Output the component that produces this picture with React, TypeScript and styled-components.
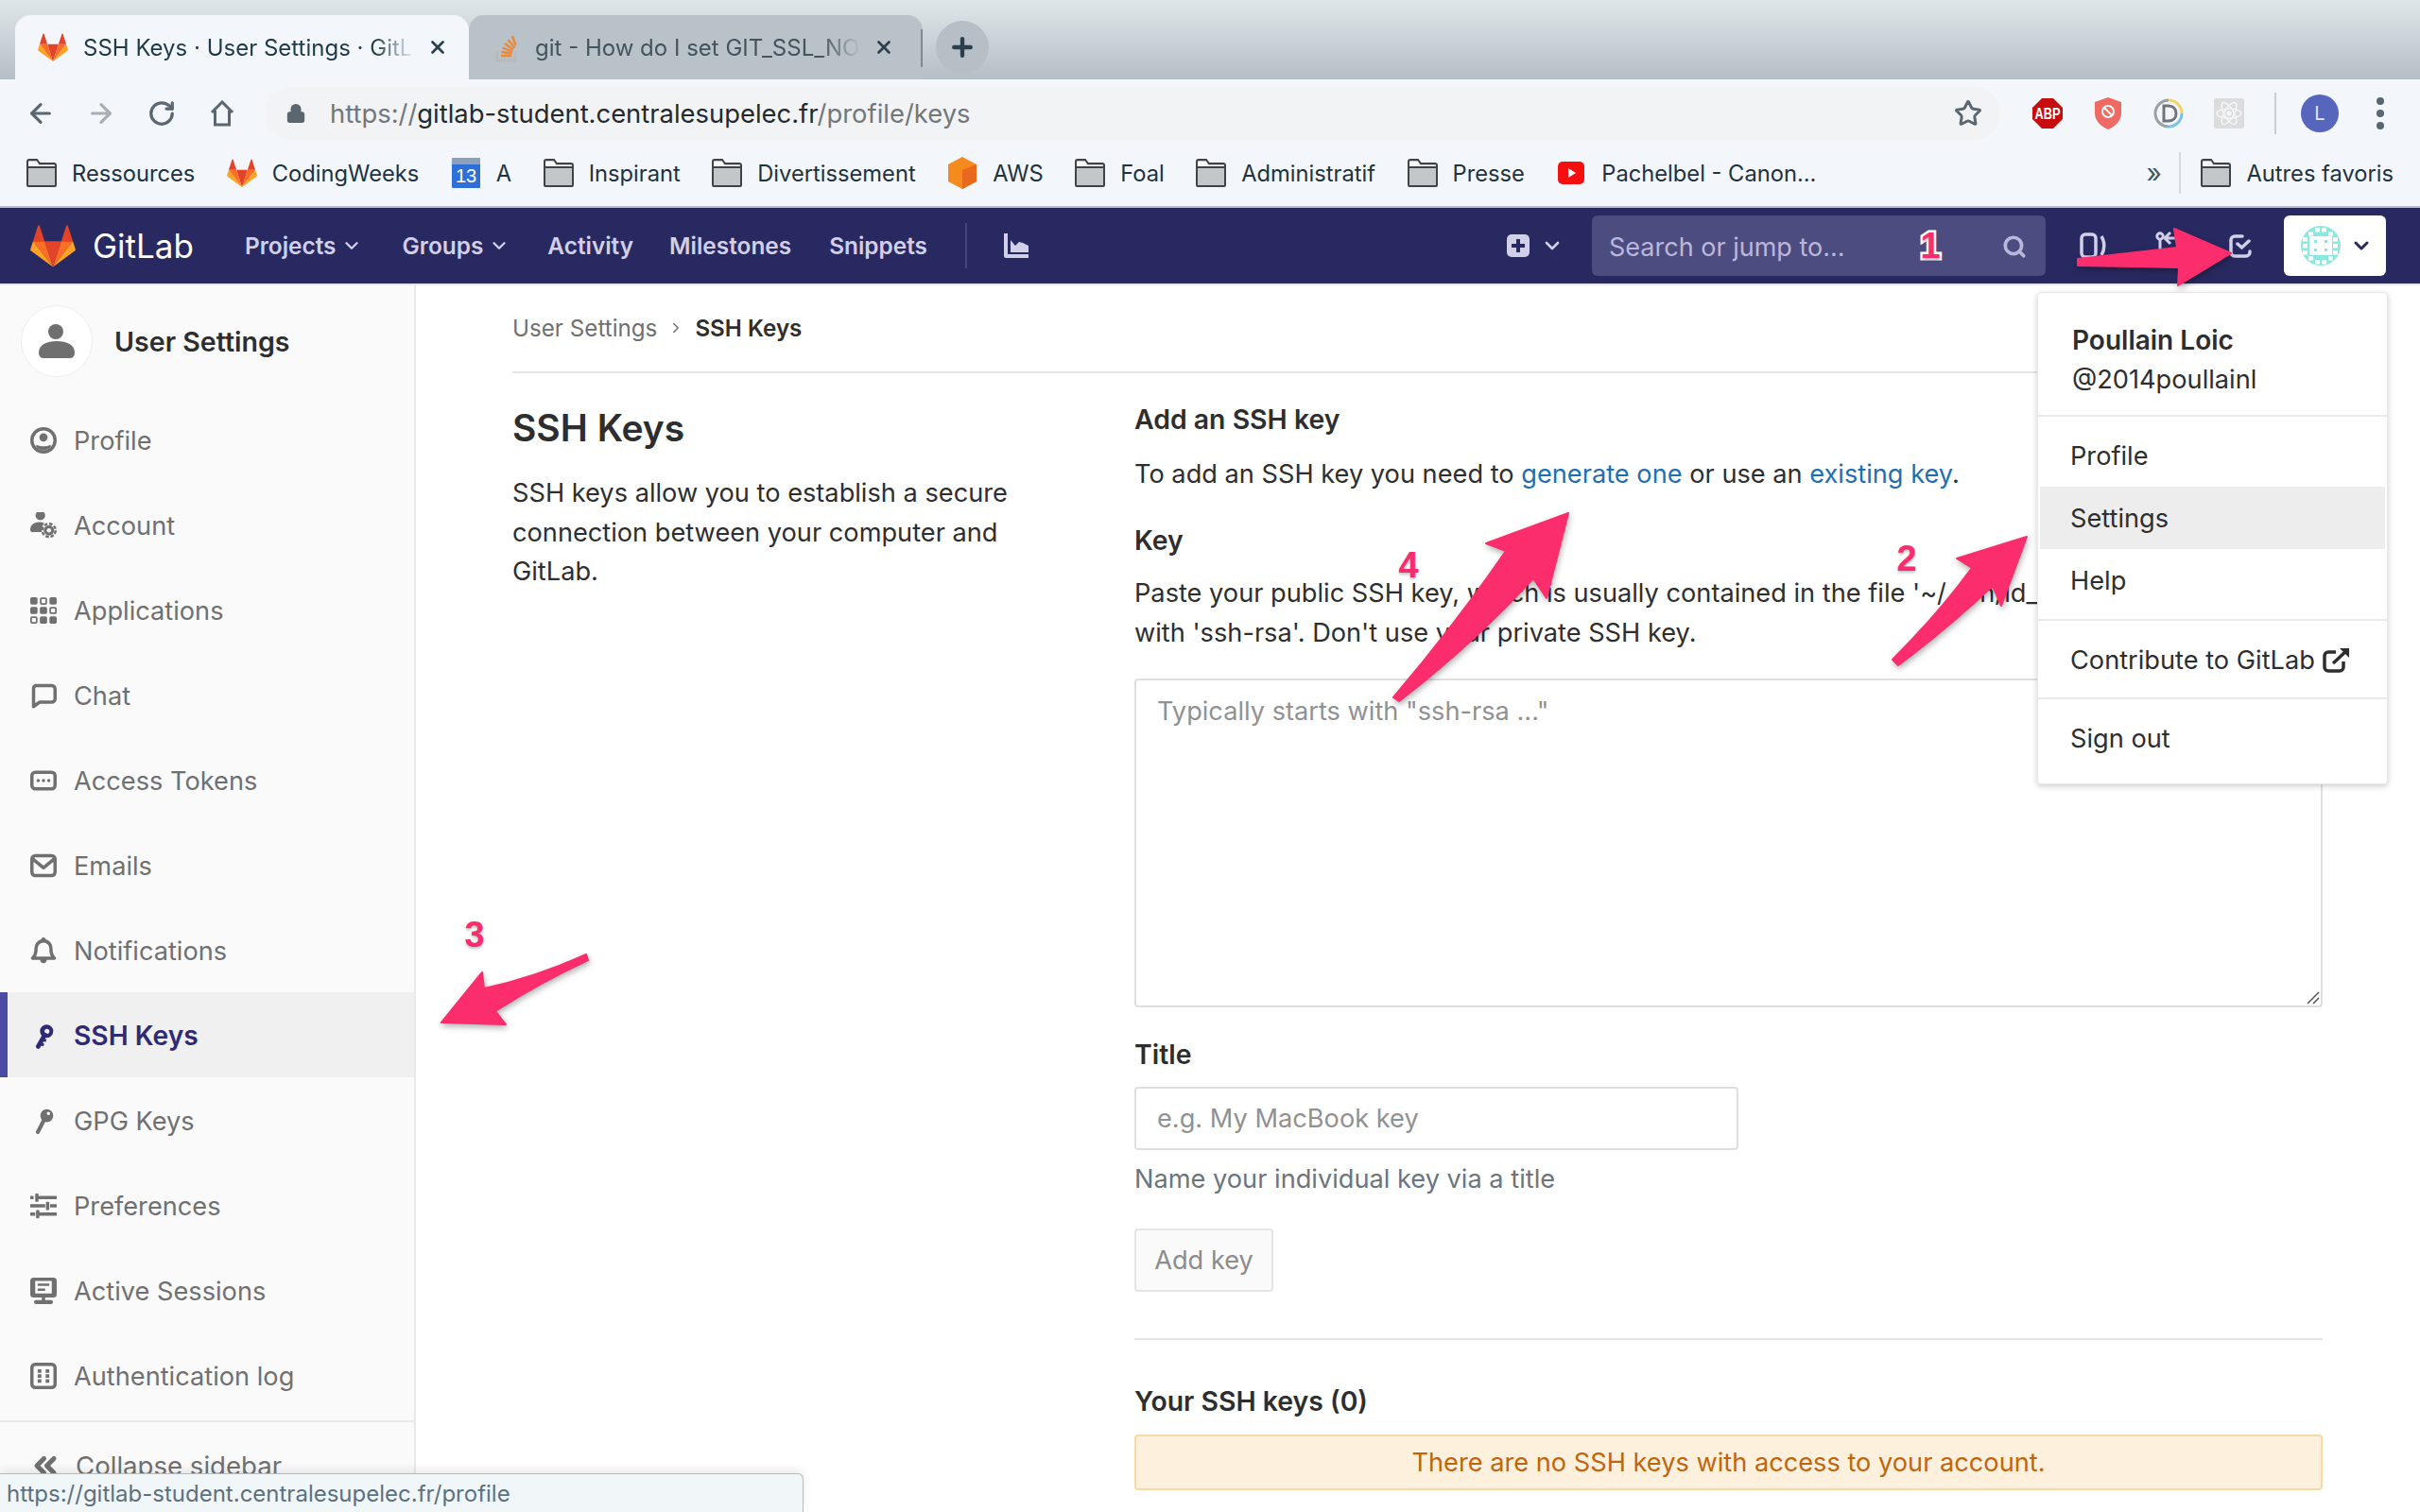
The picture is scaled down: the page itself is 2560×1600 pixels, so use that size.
import React from "react";
import styled, { createGlobalStyle } from "styled-components";
import { ArrowLeft, ArrowRight, RotateCw, Lock, X, Plus, Star, ChevronDown, Search, ChevronsLeft, ChevronRight } from "lucide-react";

const Global = createGlobalStyle`
  html, body { margin: 0; padding: 0; background: #fff; }
  * { box-sizing: border-box; }
  body { font-family: Inter, "Noto Sans", "Liberation Sans", sans-serif; color: #2e2e2e; }
`;

const Page = styled.div`
  position: relative;
  width: 2560px;
  height: 1600px;
  overflow: hidden;
  display: flex;
  flex-direction: column;
`;

/* browser chrome */
const TabStrip = styled.div`
  height: 84px;
  flex: none;
  padding: 16px 0 0 16px;
  display: flex;
  align-items: stretch;
  background: linear-gradient(#dfe6e9, #b4bfc5);
`;
const Tab = styled.div<{ $active?: boolean }>`
  width: 480px;
  display: flex;
  align-items: center;
  padding: 0 0 0 ${(p) => (p.$active ? "24px" : "28px")};
  border-radius: 16px 16px 0 0;
  background: ${(p) => (p.$active ? "#f3f7fb" : "#b8c2c8")};
  color: ${(p) => (p.$active ? "#1e3a48" : "#44545e")};
  font-size: 24px;
  white-space: nowrap;
`;
const TabTitle = styled.span<{ $width: number }>`
  width: ${(p) => p.$width}px;
  margin-left: 16px;
  overflow: hidden;
  -webkit-mask-image: linear-gradient(to right, #000 88%, transparent);
  mask-image: linear-gradient(to right, #000 88%, transparent);
`;
const TabClose = styled.span`
  margin-left: 14px;
  display: flex;
  color: #2b3f4c;
`;
const TabSep = styled.div`
  width: 2px;
  height: 40px;
  margin: 15px 0 0 -2px;
  background: #7f8a90;
`;
const NewTab = styled.div`
  width: 56px;
  height: 56px;
  margin: 6px 0 0 14px;
  border-radius: 50%;
  display: flex;
  align-items: center;
  justify-content: center;
  color: #2b3f4c;
  background: #b5bfc5;
`;
const Toolbar = styled.div`
  height: 66px;
  flex: none;
  display: flex;
  align-items: center;
  padding: 6px 0 0 11px;
  background: #f3f7fb;
`;
const ToolBtn = styled.div<{ $muted?: boolean }>`
  width: 64px;
  height: 56px;
  flex: none;
  display: flex;
  align-items: center;
  justify-content: center;
  color: ${(p) => (p.$muted ? "#a6afb5" : "#5a6770")};
`;
const Omnibox = styled.div`
  width: 1836px;
  height: 56px;
  margin: 0 18px 0 13px;
  padding: 0 19px 0 22px;
  display: flex;
  align-items: center;
  border-radius: 28px;
  background: #f2f3f4;
  font-size: 27.4px;
  color: #70787e;
`;
const Url = styled.div`
  flex: 1;
  margin-left: 25px;
  b { font-weight: 400; color: #24292d; }
`;
const ToolSep = styled.div`
  width: 2px;
  height: 44px;
  margin: 0 14px 0 16px;
  flex: none;
  background: #c9ced2;
`;
const ChromeAvatar = styled.div`
  width: 40px;
  height: 40px;
  border-radius: 50%;
  background: #5666bd;
  color: #dfe3f5;
  font-size: 20px;
  display: flex;
  align-items: center;
  justify-content: center;
`;
const Dots = styled.div`
  width: 8px;
  height: 8px;
  border-radius: 50%;
  background: #5a6770;
  box-shadow: 0 -13px 0 #5a6770, 0 13px 0 #5a6770;
`;
const Bookmarks = styled.div`
  height: 70px;
  flex: none;
  display: flex;
  align-items: center;
  padding: 0 0 2px 28px;
  background: #f3f7fb;
  border-bottom: 2px solid #b9bec4;
  font-size: 23.7px;
  color: #1e3240;
`;
const Bookmark = styled.div<{ $gap?: number }>`
  display: flex;
  align-items: center;
  gap: 16px;
  white-space: nowrap;
  margin-right: ${(p) => p.$gap ?? 33.5}px;
`;
const BookmarkIcon = styled.div`
  width: 32px;
  height: 32px;
  flex: none;
  display: flex;
  align-items: center;
  justify-content: center;
`;
const BookmarkSpacer = styled.div`
  flex: 1;
`;
const Chevrons = styled.div`
  width: 20px;
  color: #44545e;
  font-size: 28px;
  line-height: 28px;
  margin-right: 15px;
`;
const BookmarkSep = styled.div`
  width: 2px;
  height: 44px;
  background: #d6dadd;
  margin-right: 21px;
`;

/* gitlab nav */
const Nav = styled.div`
  height: 82px;
  flex: none;
  display: flex;
  align-items: center;
  background: #292961;
  border-bottom: 2px solid #e5e5ee;
  padding: 0 36px 0 32px;
`;
const Brand = styled.div`
  display: flex;
  align-items: center;
  gap: 18px;
  font-size: 35px;
  font-weight: 400;
  color: #fff;
  margin-right: 54px;
`;
const NavLink = styled.div<{ $after?: number }>`
  display: flex;
  align-items: center;
  gap: 6px;
  font-size: 24.4px;
  font-weight: 600;
  color: #d1d0e8;
  margin-right: ${(p) => p.$after ?? 40}px;
`;
const NavSep = styled.div`
  width: 2px;
  height: 48px;
  background: #46467a;
  margin-right: 38px;
`;
const NavSpacer = styled.div`
  flex: 1;
`;
const SearchBox = styled.div`
  width: 480px;
  height: 64px;
  margin: 0 36px 0 30px;
  padding: 2px 20px 0 18px;
  display: flex;
  align-items: center;
  justify-content: space-between;
  border-radius: 6px;
  background: #4d4c80;
  color: #b9b8dc;
  font-size: 27px;
`;
const NavIcon = styled.div<{ $after?: number; $before?: number }>`
  display: flex;
  margin: 0 ${(p) => p.$after ?? 0}px 0 ${(p) => p.$before ?? 0}px;
  color: #d1d0e8;
`;
const ProfileBtn = styled.div`
  width: 108px;
  height: 64px;
  padding-left: 18px;
  display: flex;
  align-items: center;
  gap: 10px;
  border-radius: 6px;
  background: #fff;
  color: #292961;
`;

/* body */
const Body = styled.div`
  flex: 1;
  display: flex;
  min-height: 0;
`;
const Sidebar = styled.aside`
  width: 440px;
  flex: none;
  background: #fafafa;
  border-right: 2px solid #e9e9e9;
  display: flex;
  flex-direction: column;
`;
const SideHead = styled.div`
  height: 118px;
  flex: none;
  padding-left: 22px;
  display: flex;
  align-items: center;
  gap: 23px;
  font-size: 28.6px;
  font-weight: 600;
  color: #2e2e2e;
`;
const SideAvatar = styled.div`
  width: 76px;
  height: 76px;
  border-radius: 50%;
  background: #fff;
  border: 1px solid #eee;
  display: flex;
  align-items: center;
  justify-content: center;
`;
const SideItem = styled.div<{ $active?: boolean }>`
  height: 90px;
  flex: none;
  display: flex;
  align-items: center;
  gap: 18px;
  padding: 2px 0 0 ${(p) => (p.$active ? "24px" : "32px")};
  font-size: ${(p) => (p.$active ? "28.2px" : "27.2px")};
  color: ${(p) => (p.$active ? "#2f2a75" : "#707070")};
  font-weight: ${(p) => (p.$active ? 600 : 400)};
  background: ${(p) => (p.$active ? "#f0f0f0" : "transparent")};
  border-left: ${(p) => (p.$active ? "8px solid #4b4ba3" : "none")};
`;
const SideIcon = styled.svg`
  width: 28px;
  height: 28px;
  flex: none;
  fill: currentColor;
`;
const SideBottom = styled.div`
  margin-top: 3px;
  height: 90px;
  padding: 4px 0 0 30px;
  border-top: 2px solid #e9e9e9;
  display: flex;
  align-items: center;
  gap: 14px;
  font-size: 27.6px;
  color: #707070;
`;

const Main = styled.main`
  flex: 1;
  min-width: 0;
  padding: 0 103px 0 102px;
`;
const Crumbs = styled.div`
  height: 93px;
  padding-bottom: 1px;
  display: flex;
  align-items: center;
  gap: 11px;
  border-bottom: 2px solid #e5e5e5;
  font-size: 24.2px;
  color: #707070;
  b { font-weight: 600; color: #2e2e2e; }
`;
const Columns = styled.div`
  display: grid;
  grid-template-columns: 658px minmax(0, 1fr);
`;
const LeftCol = styled.div`
  padding-top: 30px;
  h1 { margin: 0 0 20px; font-size: 39px; line-height: 56px; font-weight: 600; color: #2e2e2e; }
  p { margin: 0; width: 560px; font-size: 27.2px; line-height: 41.5px; }
`;
const RightCol = styled.div`
  padding-top: 28px;
`;
const Label = styled.div<{ $top: number; $bottom: number }>`
  margin: ${(p) => p.$top}px 0 ${(p) => p.$bottom}px;
  font-size: 28.4px;
  line-height: 42px;
  font-weight: 600;
`;
const Copy = styled.div`
  font-size: 27.2px;
  line-height: 42px;
  white-space: nowrap;
  a { color: #1f6fb0; text-decoration: none; }
`;
const Muted = styled(Copy)`
  color: #6c757d;
  margin-top: 10px;
`;
const KeyBox = styled.div`
  position: relative;
  height: 348px;
  margin-top: 27px;
  padding: 12px 22px;
  border: 2px solid #dfdfdf;
  border-radius: 4px;
  font-size: 27.2px;
  line-height: 42px;
  color: #919191;
`;
const Grip = styled.svg`
  position: absolute;
  right: 1px;
  bottom: 1px;
  width: 16px;
  height: 16px;
`;
const TitleBox = styled.div`
  width: 639px;
  height: 67px;
  padding: 0 22px;
  display: flex;
  align-items: center;
  border: 2px solid #dfdfdf;
  border-radius: 4px;
  font-size: 27.2px;
  color: #919191;
`;
const AddBtn = styled.div`
  width: 147px;
  height: 67px;
  margin-top: 31px;
  display: flex;
  align-items: center;
  justify-content: center;
  border: 2px solid #e5e5e5;
  border-radius: 4px;
  background: #fafafa;
  font-size: 27.2px;
  color: #8c8c8c;
`;
const Rule = styled.div`
  height: 2px;
  margin: 49px 0 44px;
  background: #e5e5e5;
`;
const Alert = styled.div`
  height: 59px;
  display: flex;
  align-items: center;
  justify-content: center;
  border: 2px solid #f7d9a3;
  border-radius: 4px;
  background: #fdf1dd;
  font-size: 27.2px;
  color: #c0650c;
`;

/* dropdown, lies over the page */
const Menu = styled.div`
  position: absolute;
  left: 2155px;
  top: 309px;
  width: 371px;
  height: 521px;
  padding: 1px 2px;
  background: #fff;
  border-radius: 4px;
  border: 1px solid #e8e8e8;
  box-shadow: 0 2px 6px rgba(0, 0, 0, 0.2);
  font-size: 27.2px;
  color: #2e2e2e;
`;
const MenuHead = styled.div`
  height: 128px;
  padding: 28px 0 0 34px;
  line-height: 42px;
  b { font-weight: 600; font-size: 28px; display: block; }
`;
const MenuSep = styled.div`
  height: 2px;
  margin: 0 -2px;
  background: #eaeaea;
`;
const MenuGroup = styled.div<{ $height: number }>`
  height: ${(p) => p.$height}px;
  padding-top: 8px;
`;
const MenuItem = styled.div<{ $on?: boolean }>`
  height: 66px;
  padding-left: 32px;
  display: flex;
  align-items: center;
  gap: 8px;
  background: ${(p) => (p.$on ? "#ededed" : "transparent")};
`;

/* status bubble, lies over the page */
const Status = styled.div`
  position: absolute;
  left: 0;
  bottom: 0;
  width: 850px;
  height: 41px;
  padding-left: 7px;
  display: flex;
  align-items: center;
  background: #f1f6f9;
  border: 1px solid #b5b9bc;
  border-left: none;
  border-bottom: none;
  border-radius: 0 6px 0 0;
  box-shadow: 0 -4px 10px rgba(0, 0, 0, 0.08);
  font-size: 24px;
  color: #5c7180;
`;

/* hand-drawn annotations on top of the screenshot */
const Overlay = styled.svg`
  position: absolute;
  left: 0;
  top: 0;
  width: 2560px;
  height: 1600px;
  pointer-events: none;
  filter: drop-shadow(1px 3px 3px rgba(0, 0, 0, 0.3));
`;
const Mark = styled.span<{ $x: number; $y: number }>`
  position: absolute;
  left: ${(p) => p.$x}px;
  top: ${(p) => p.$y}px;
  transform: translate(-50%, -50%);
  font-family: "Liberation Sans", sans-serif;
  font-weight: 700;
  font-size: 38px;
  line-height: 38px;
  color: #f92d6e;
  -webkit-text-stroke: 5px #fff;
  paint-order: stroke fill;
  text-shadow: 0 2px 3px rgba(0, 0, 0, 0.25);
`;

const Fox = ({ w = 32 }: { w?: number }) => (
  <svg width={w} height={w} viewBox="0 0 36 35">
    <path fill="#e24329" d="M18 34.3l6.6-20.4H11.4z" />
    <path fill="#fc6d26" d="M18 34.3L11.4 13.9H2.2z" />
    <path fill="#fca326" d="M2.2 13.9L.2 20.1c-.2.6 0 1.2.5 1.5L18 34.3z" />
    <path fill="#e24329" d="M2.2 13.9h9.2L7.4 1.7c-.2-.6-1.1-.6-1.3 0z" />
    <path fill="#fc6d26" d="M18 34.3l6.6-20.4h9.2z" />
    <path fill="#fca326" d="M33.8 13.9l2 6.2c.2.6 0 1.2-.5 1.5L18 34.3z" />
    <path fill="#e24329" d="M33.8 13.9h-9.2l4-12.2c.2-.6 1.1-.6 1.3 0z" />
  </svg>
);
const Folder = () => (
  <svg width="32" height="30" viewBox="0 0 32 30">
    <path d="M1 28V3c0-1 .6-2 2-2h8l3 4h15c1.2 0 2 .8 2 2v21c0 .6-.4 1-1 1H2c-.6 0-1-.4-1-1z" fill="#c4c7c9" stroke="#3f4347" strokeWidth="2" />
    <path d="M1 9h30" stroke="#3f4347" strokeWidth="2" />
    <path d="M2 8h28V7H13L11 3H2z" fill="#f4f6f8" />
  </svg>
);
const StackIcon = () => (
  <svg width="26" height="32" viewBox="0 0 26 32">
    <path d="M2 20v10h19V20" fill="none" stroke="#b7b9ba" strokeWidth="3" />
    <path d="M6 25h11M6.500 21l11 1.500M7.500 16.500l10.500 4M10 12l9 6.500M13.500 8l7 8.500M18 4l3.500 10" stroke="#e8893a" strokeWidth="2.400" />
  </svg>
);
const Calendar = () => (
  <svg width="32" height="34" viewBox="0 0 32 34">
    <rect x="1" y="1" width="30" height="32" rx="1" fill="#2f6fd8" />
    <rect x="1" y="1" width="30" height="7" fill="#8aa0bb" />
    <text x="16" y="27" fontSize="20" fill="#fff" textAnchor="middle" fontFamily="Liberation Sans">13</text>
  </svg>
);
const Aws = () => (
  <svg width="32" height="34" viewBox="0 0 32 34">
    <path d="M16 0l15 8v18l-15 8-15-8V8z" fill="#f58a1f" />
    <path d="M16 14l15-6v18l-15 8z" fill="#e8681d" />
  </svg>
);
const Youtube = () => (
  <svg width="28" height="24" viewBox="0 0 28 24">
    <rect width="28" height="24" rx="5" fill="#f50f0f" />
    <path d="M11 7l8 5-8 5z" fill="#fff" />
  </svg>
);
const HomeIcon = () => (
  <svg width="28" height="28" viewBox="0 0 28 28" fill="none" stroke="#5a6770" strokeWidth="3">
    <path d="M3 13L14 2l11 11M6.500 11v15h15V11" />
  </svg>
);
const Abp = () => (
  <svg width="32" height="32" viewBox="0 0 32 32">
    <path d="M10 0h12l10 10v12L22 32H10L0 22V10z" fill="#c70d0d" />
    <text x="16" y="22" fontSize="17" fontWeight="700" fill="#fff" textAnchor="middle" fontFamily="Liberation Sans" textLength="27" lengthAdjust="spacingAndGlyphs">ABP</text>
  </svg>
);
const Shield = () => (
  <svg width="30" height="34" viewBox="0 0 30 34">
    <path d="M15 0l14 5v12c0 8-7 14-14 17C8 31 1 25 1 17V5z" fill="#ee6a62" />
    <circle cx="15" cy="15" r="6" fill="none" stroke="#fff" strokeWidth="2" />
    <path d="M11 11l8 8" stroke="#fff" strokeWidth="2" />
  </svg>
);
const DIcon = () => (
  <svg width="32" height="32" viewBox="0 0 32 32" fill="none">
    <path d="M16 2a14 14 0 0 1 14 14" stroke="#f3d36a" strokeWidth="3" />
    <path d="M30 16a14 14 0 0 1-14 14" stroke="#7cc3e8" strokeWidth="3" />
    <path d="M16 30a14 14 0 0 1 0-28" stroke="#9aa0a6" strokeWidth="3" />
    <path d="M11 8h5c5 0 8 3.500 8 8s-3 8-8 8h-5z" stroke="#70767c" strokeWidth="3" />
  </svg>
);
const ReactIcon = () => (
  <svg width="32" height="32" viewBox="0 0 32 32" fill="none" stroke="#f4f6f7" strokeWidth="1.500">
    <rect width="32" height="32" rx="2" fill="#dadcde" stroke="none" />
    <ellipse cx="16" cy="16" rx="13" ry="5" />
    <ellipse cx="16" cy="16" rx="13" ry="5" transform="rotate(60 16 16)" />
    <ellipse cx="16" cy="16" rx="13" ry="5" transform="rotate(120 16 16)" />
    <circle cx="16" cy="16" r="2" fill="#f4f6f7" />
  </svg>
);

const NavPlus = () => (
  <svg width="24" height="24" viewBox="0 0 24 24">
    <rect width="24" height="24" rx="5" fill="#d1d0e8" />
    <path d="M12 5v14M5 12h14" stroke="#292961" strokeWidth="4" />
  </svg>
);
const ChartIcon = () => (
  <svg width="28" height="28" viewBox="0 0 28 28">
    <path d="M1 1h4v22h22v4H3a2 2 0 0 1-2-2z" fill="#d1d0e8" />
    <path d="M8 21V8l5 6 4-4 4 1 6 3v7z" fill="#d1d0e8" />
  </svg>
);
const IssuesIcon = () => (
  <svg width="28" height="28" viewBox="0 0 28 28" fill="none" stroke="#d1d0e8" strokeWidth="3.500">
    <rect x="2" y="2" width="15" height="24" rx="4" />
    <path d="M23 4c1.800 3 2.800 6.500 2.800 10s-1 7-2.800 10" strokeWidth="3.500" />
  </svg>
);
const MergeIcon = () => (
  <svg width="28" height="30" viewBox="0 0 28 30" fill="none" stroke="#d1d0e8" strokeWidth="3">
    <circle cx="5" cy="5" r="3.200" />
    <path d="M5 9v19M12 7h9a4 4 0 0 1 4 4v17M16 1l-6 6 6 6" />
  </svg>
);
const TodoIcon = () => (
  <svg width="24" height="26" viewBox="0 0 24 26" fill="none" stroke="#d1d0e8" strokeWidth="3.500" strokeLinecap="round">
    <path d="M14 3H6a4 4 0 0 0-4 4v13a4 4 0 0 0 4 4h12a4 4 0 0 0 4-4v-1" />
    <path d="M9 11l4.500 4L21 8" />
  </svg>
);
const identiCells = [
  [15, 2], [22, 2], [8, 6], [29, 6], [2, 12], [34, 12], [2, 19], [34, 19], [2, 26], [34, 26], [8, 32], [29, 32], [15, 36], [22, 36],
];
const Identicon = () => (
  <svg width="42" height="42" viewBox="0 0 42 42">
    <circle cx="21" cy="21" r="21" fill="#8ae9df" />
    {identiCells.map(([x, y]) => (
      <rect key={`${x}-${y}`} x={x} y={y} width="5" height="4.500" fill="#fff" />
    ))}
    <rect x="9" y="11" width="24" height="20" fill="#fff" />
    <path d="M14 15h3v3h-3zM25 15h3v3h-3zM14 24h3v3h-3zM25 24h3v3h-3z" fill="#8ae9df" />
  </svg>
);
const External = () => (
  <svg width="30" height="28" viewBox="0 0 30 28" fill="none" stroke="#2e2e2e" strokeWidth="3.500">
    <path d="M14 6H6a4 4 0 0 0-4 4v12a4 4 0 0 0 4 4h12a4 4 0 0 0 4-4v-6" />
    <path d="M11 18L27 3" />
    <path d="M18 2h10v10z" fill="#2e2e2e" stroke="none" />
  </svg>
);

const sideIcons: Record<string, React.ReactNode> = {
  profile: (
    <>
      <path fillRule="evenodd" d="M8 0a8 8 0 1 1 0 16A8 8 0 0 1 8 0zm0 2a6 6 0 1 0 0 12A6 6 0 0 0 8 2z" />
      <circle cx="8" cy="6.200" r="2.500" />
      <path d="M3.800 10.500c1.400.8 2.800 1.100 4.200 1.100s2.800-.3 4.200-1.100l.3 1.300C11.300 13.200 9.700 14 8 14s-3.300-.8-4.500-2.200z" />
    </>
  ),
  account: (
    <>
      <circle cx="6.100" cy="2" r="2.900" />
      <path d="M0 10.500C0 7.500 2.500 6 5.800 6c1 0 1.900.2 2.600.5-1 1.300-1.700 3.300-1.500 5.500H1.500C.5 12 0 11.500 0 10.500z" />
      <circle cx="11.300" cy="11" r="3.100" />
      <circle cx="11.300" cy="11" r="4" fill="none" stroke="currentColor" strokeWidth="1.400" strokeDasharray="2.100 1.040" />
      <circle cx="11.300" cy="11" r="1.300" fill="#fafafa" />
    </>
  ),
  apps: (
    <>
      <rect x="0" y="0" width="4.400" height="4.400" rx="1" />
      <rect x="6.300" y=".6" width="3.400" height="3.400" rx=".6" fill="none" stroke="currentColor" />
      <rect x="11.600" y="0" width="4.400" height="4.400" rx="1" />
      <rect x="0" y="5.800" width="4.400" height="4.400" rx="1" />
      <rect x="5.800" y="5.800" width="4.400" height="4.400" rx="1" />
      <rect x="12.100" y="6.300" width="3.400" height="3.400" rx=".6" fill="none" stroke="currentColor" />
      <rect x=".5" y="12.100" width="3.400" height="3.400" rx=".6" fill="none" stroke="currentColor" />
      <rect x="5.800" y="11.600" width="4.400" height="4.400" rx="1" />
      <rect x="11.600" y="11.600" width="4.400" height="4.400" rx="1" />
    </>
  ),
  chat: <path fillRule="evenodd" d="M3 1h10a3 3 0 0 1 3 3v6a3 3 0 0 1-3 3H6l-3.500 2.500c-.7.500-1.500.1-1.500-.8V4a3 3 0 0 1 2-3zm.5 2A1 1 0 0 0 3 4v8.500L5.500 11H13a1 1 0 0 0 1-1V4a1 1 0 0 0-1-1z" />,
  token: (
    <>
      <path fillRule="evenodd" d="M3 2h10a3 3 0 0 1 3 3v6a3 3 0 0 1-3 3H3a3 3 0 0 1-3-3V5a3 3 0 0 1 3-3zm0 2a1 1 0 0 0-1 1v6a1 1 0 0 0 1 1h10a1 1 0 0 0 1-1V5a1 1 0 0 0-1-1z" />
      <circle cx="4.800" cy="8" r="1" />
      <circle cx="8" cy="8" r="1" />
      <circle cx="11.200" cy="8" r="1" />
    </>
  ),
  mail: <path fillRule="evenodd" d="M3 1h10a3 3 0 0 1 3 3v8a3 3 0 0 1-3 3H3a3 3 0 0 1-3-3V4a3 3 0 0 1 3-3zm-.7 2.300L8 8l5.700-4.700A1 1 0 0 0 13 3H3a1 1 0 0 0-.7.300zM14 5.700L8.600 10.200a1 1 0 0 1-1.200 0L2 5.700V12a1 1 0 0 0 1 1h10a1 1 0 0 0 1-1z" />,
  bell: <path fillRule="evenodd" d="M8 0c.8 0 1.300.5 1.400 1.200A5.500 5.500 0 0 1 13.500 6.500c0 2.500.5 4 1.800 5.300.6.600.4 1.700-.6 1.700H10a2 2 0 0 1-4 0H1.300c-1 0-1.200-1.100-.6-1.700C2 10.500 2.500 9 2.500 6.500a5.500 5.500 0 0 1 4.100-5.300C6.700.5 7.200 0 8 0zm0 3.200a3.400 3.400 0 0 0-3.500 3.400c0 2-.3 3.500-1 4.900h9c-.7-1.400-1-2.900-1-4.900A3.400 3.400 0 0 0 8 3.200z" />,
  ssh: (
    <>
      <path fillRule="evenodd" d="M9.900 1.300a4 4 0 1 1 0 8 4 4 0 0 1 0-8zm.2 2.500a1.500 1.500 0 1 0 0 3 1.500 1.500 0 0 0 0-3z" />
      <path d="M8.800 7.500L4.800 14.500" stroke="currentColor" strokeWidth="2.800" strokeLinecap="round" fill="none" />
      <path d="M7.200 10.200l2.400.9M5.800 12.800l2.400.9" stroke="currentColor" strokeWidth="1.700" fill="none" />
    </>
  ),
  gpg: (
    <>
      <path fillRule="evenodd" d="M10 1a3.900 3.900 0 1 1 0 7.800A3.900 3.900 0 0 1 10 1zm1 1.600a1 1 0 1 0 0 2 1 1 0 0 0 0-2z" />
      <path d="M8.600 7L4.600 14.800" stroke="currentColor" strokeWidth="2.400" strokeLinecap="round" fill="none" />
    </>
  ),
  prefs: (
    <>
      <path d="M4 2h12v2H4zM0 2h2v2H0zM0 7h9v2H0zM12 7h4v2h-4zM5 12h11v2H5zM0 12h3v2H0z" />
      <rect x="3" y="0.500" width="2" height="5" rx=".5" />
      <rect x="9.500" y="5.500" width="2" height="5" rx=".5" />
      <rect x="3.500" y="10.500" width="2" height="5" rx=".5" />
    </>
  ),
  monitor: (
    <>
      <path fillRule="evenodd" d="M2 0h12a2 2 0 0 1 2 2v8a2 2 0 0 1-2 2H9v1.500h3.500a1 1 0 0 1 0 2.500h-9a1 1 0 0 1 0-2.500H7V12H2a2 2 0 0 1-2-2V2a2 2 0 0 1 2-2zm1 2v7.500h10V2z" />
      <path d="M4.500 3.500h7v1.500h-7zM4.500 6.500h4.500V8H4.500z" />
    </>
  ),
  log: (
    <>
      <path fillRule="evenodd" d="M3 0h10a3 3 0 0 1 3 3v10a3 3 0 0 1-3 3H3a3 3 0 0 1-3-3V3a3 3 0 0 1 3-3zm0 2a1 1 0 0 0-1 1v10a1 1 0 0 0 1 1h10a1 1 0 0 0 1-1V3a1 1 0 0 0-1-1z" />
      <path d="M4.500 4h2.200v2.200H4.500zM9.300 4h2.200v2.200H9.300zM4.500 7h2.200v2.200H4.500zM9.300 7h2.200v2.200H9.300zM4.500 10h2.200v2.200H4.500zM9.300 10h2.200v2.200H9.300z" />
    </>
  ),
};

const sideLinks = [
  ["profile", "Profile"],
  ["account", "Account"],
  ["apps", "Applications"],
  ["chat", "Chat"],
  ["token", "Access Tokens"],
  ["mail", "Emails"],
  ["bell", "Notifications"],
  ["ssh", "SSH Keys"],
  ["gpg", "GPG Keys"],
  ["prefs", "Preferences"],
  ["monitor", "Active Sessions"],
  ["log", "Authentication log"],
];

export default function App() {
  return (
    <Page>
      <Global />
      <TabStrip>
        <Tab $active>
          <Fox />
          <TabTitle $width={350}>SSH Keys · User Settings · GitLab</TabTitle>
          <TabClose><X size={22} strokeWidth={3} /></TabClose>
        </Tab>
        <Tab>
          <StackIcon />
          <TabTitle $width={344}>git - How do I set GIT_SSL_NO_VERIFY</TabTitle>
          <TabClose><X size={22} strokeWidth={3} /></TabClose>
        </Tab>
        <TabSep />
        <NewTab><Plus size={30} strokeWidth={3.5} /></NewTab>
      </TabStrip>

      <Toolbar>
        <ToolBtn><ArrowLeft size={32} strokeWidth={2.4} /></ToolBtn>
        <ToolBtn $muted><ArrowRight size={32} strokeWidth={2.4} /></ToolBtn>
        <ToolBtn><RotateCw size={30} strokeWidth={2.6} /></ToolBtn>
        <ToolBtn><HomeIcon /></ToolBtn>
        <Omnibox>
          <Lock size={22} fill="#5a6770" color="#5a6770" />
          <Url>https://<b>gitlab-student.centralesupelec.fr</b>/profile/keys</Url>
          <Star size={30} strokeWidth={2.4} color="#5a6770" />
        </Omnibox>
        <ToolBtn><Abp /></ToolBtn>
        <ToolBtn><Shield /></ToolBtn>
        <ToolBtn><DIcon /></ToolBtn>
        <ToolBtn><ReactIcon /></ToolBtn>
        <ToolSep />
        <ToolBtn><ChromeAvatar>L</ChromeAvatar></ToolBtn>
        <ToolBtn><Dots /></ToolBtn>
      </Toolbar>

      <Bookmarks>
        <Bookmark><BookmarkIcon><Folder /></BookmarkIcon>Ressources</Bookmark>
        <Bookmark><BookmarkIcon><Fox /></BookmarkIcon>CodingWeeks</Bookmark>
        <Bookmark><BookmarkIcon><Calendar /></BookmarkIcon>A</Bookmark>
        <Bookmark><BookmarkIcon><Folder /></BookmarkIcon>Inspirant</Bookmark>
        <Bookmark><BookmarkIcon><Folder /></BookmarkIcon>Divertissement</Bookmark>
        <Bookmark><BookmarkIcon><Aws /></BookmarkIcon>AWS</Bookmark>
        <Bookmark><BookmarkIcon><Folder /></BookmarkIcon>Foal</Bookmark>
        <Bookmark><BookmarkIcon><Folder /></BookmarkIcon>Administratif</Bookmark>
        <Bookmark><BookmarkIcon><Folder /></BookmarkIcon>Presse</Bookmark>
        <Bookmark><BookmarkIcon><Youtube /></BookmarkIcon>Pachelbel - Canon...</Bookmark>
        <BookmarkSpacer />
        <Chevrons>»</Chevrons>
        <BookmarkSep />
        <Bookmark $gap={28}><BookmarkIcon><Folder /></BookmarkIcon>Autres favoris</Bookmark>
      </Bookmarks>

      <Nav>
        <Brand><Fox w={48} />GitLab</Brand>
        <NavLink $after={42}>Projects <ChevronDown size={22} strokeWidth={2.6} /></NavLink>
        <NavLink>Groups <ChevronDown size={22} strokeWidth={2.6} /></NavLink>
        <NavLink $after={38}>Activity</NavLink>
        <NavLink>Milestones</NavLink>
        <NavLink>Snippets</NavLink>
        <NavSep />
        <NavIcon><ChartIcon /></NavIcon>
        <NavSpacer />
        <NavPlus />
        <NavIcon $before={12}><ChevronDown size={24} strokeWidth={2.6} /></NavIcon>
        <SearchBox>Search or jump to...<Search size={26} strokeWidth={3.4} /></SearchBox>
        <NavIcon $after={52}><IssuesIcon /></NavIcon>
        <NavIcon $after={50}><MergeIcon /></NavIcon>
        <NavIcon $after={34}><TodoIcon /></NavIcon>
        <ProfileBtn><Identicon /><ChevronDown size={24} strokeWidth={3} /></ProfileBtn>
      </Nav>

      <Body>
        <Sidebar>
          <SideHead>
            <SideAvatar>
              <svg width="38" height="36" viewBox="0 0 38 36" fill="#6f6f6f">
                <circle cx="18" cy="8" r="8" />
                <path d="M0 30c0-8 8-12 19-12s19 4 19 12c0 4-2 6-6 6H6c-4 0-6-2-6-6z" />
              </svg>
            </SideAvatar>
            User Settings
          </SideHead>
          {sideLinks.map(([icon, name]) => (
            <SideItem key={name} $active={icon === "ssh"}>
              <SideIcon viewBox="0 0 16 16">{sideIcons[icon]}</SideIcon>
              {name}
            </SideItem>
          ))}
          <SideBottom><ChevronsLeft size={36} strokeWidth={3.4} />Collapse sidebar</SideBottom>
        </Sidebar>

        <Main>
          <Crumbs>User Settings <ChevronRight size={18} strokeWidth={2} /> <b>SSH Keys</b></Crumbs>
          <Columns>
            <LeftCol>
              <h1>SSH Keys</h1>
              <p>SSH keys allow you to establish a secure connection between your computer and GitLab.</p>
            </LeftCol>
            <RightCol>
              <Label $top={0} $bottom={16}>Add an SSH key</Label>
              <Copy>To add an SSH key you need to <a>generate one</a> or use an <a>existing key</a>.</Copy>
              <Label $top={28} $bottom={14}>Key</Label>
              <Copy>Paste your public SSH key, which is usually contained in the file '~/.ssh/id_rsa.pub' and begins</Copy>
              <Copy>with 'ssh-rsa'. Don't use your private SSH key.</Copy>
              <KeyBox>
                Typically starts with "ssh-rsa ..."
                <Grip viewBox="0 0 16 16"><path d="M15 3L3 15M15 9l-6 6" stroke="#555" strokeWidth="1.500" /></Grip>
              </KeyBox>
              <Label $top={29} $bottom={13}>Title</Label>
              <TitleBox>e.g. My MacBook key</TitleBox>
              <Muted>Name your individual key via a title</Muted>
              <AddBtn>Add key</AddBtn>
              <Rule />
              <Label $top={0} $bottom={14}>Your SSH keys (0)</Label>
              <Alert>There are no SSH keys with access to your account.</Alert>
            </RightCol>
          </Columns>
        </Main>
      </Body>

      <Menu>
        <MenuHead><b>Poullain Loic</b>@2014poullainl</MenuHead>
        <MenuSep />
        <MenuGroup $height={214}>
          <MenuItem>Profile</MenuItem>
          <MenuItem $on>Settings</MenuItem>
          <MenuItem>Help</MenuItem>
        </MenuGroup>
        <MenuSep />
        <MenuGroup $height={81}>
          <MenuItem>Contribute to GitLab <External /></MenuItem>
        </MenuGroup>
        <MenuSep />
        <MenuGroup $height={90}>
          <MenuItem>Sign out</MenuItem>
        </MenuGroup>
      </Menu>

      <Status>https://gitlab-student.centralesupelec.fr/profile</Status>

      <Overlay viewBox="0 0 2560 1600">
        <g fill="#fb2d6c" stroke="#fb2d6c" strokeWidth="2" strokeLinejoin="round">
          <path d="M2198 274Q2250 268 2303 262L2300 242L2360 268L2304 302L2305 283Q2250 282 2198 281Z" />
          <path d="M2002 698Q2050 650 2086 601L2070 591L2144 568L2117 641L2108 620Q2060 665 2008 704Z" />
          <path d="M620 1010Q565 1035 512 1046L510 1029L467 1082L535 1084L524 1070Q570 1040 622 1016Z" />
          <path d="M1474 738Q1540 660 1593 583L1572 575L1659 543L1636 633L1622 612Q1560 680 1480 742Z" />
        </g>
      </Overlay>
      <Mark $x={2042} $y={260}>1</Mark>
      <Mark $x={2017} $y={591}>2</Mark>
      <Mark $x={502} $y={989}>3</Mark>
      <Mark $x={1490} $y={598}>4</Mark>
    </Page>
  );
}
